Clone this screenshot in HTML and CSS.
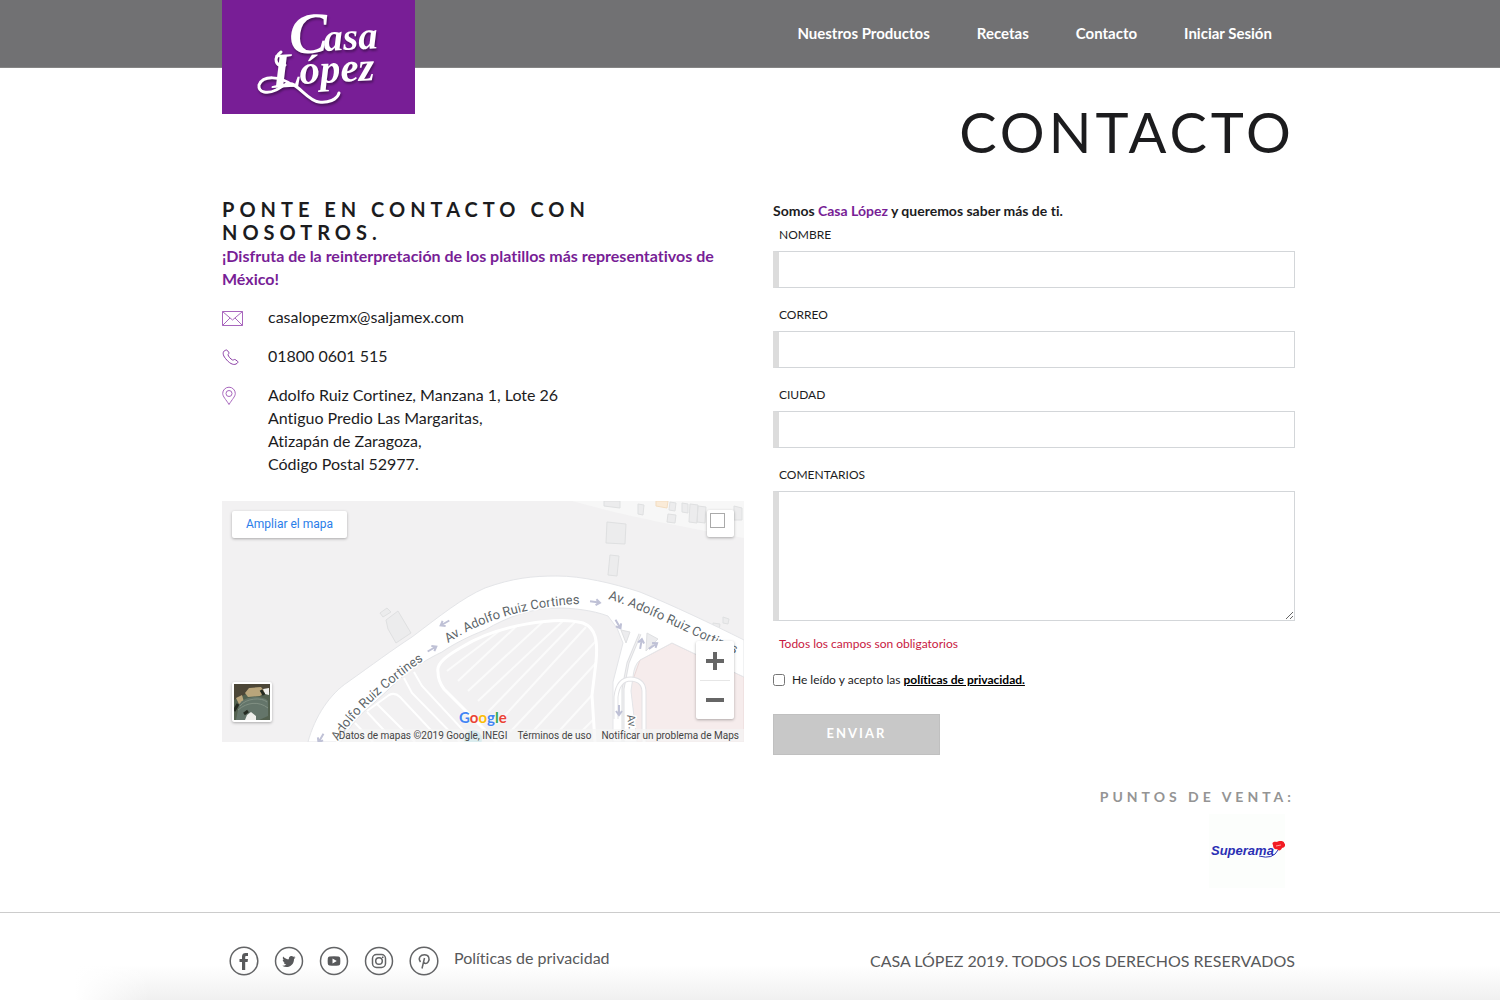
FILE: index.html
```html
<!DOCTYPE html>
<html lang="es">

<head>
    <meta charset="UTF-8">
    <meta name="viewport" content="width=device-width, initial-scale=1.0">
    <title>Contacto | Casa López</title>
    <link rel="stylesheet" href="styles.css">
</head>

<body>
    <header class="header">
        <a class="logo" href="#" aria-label="Casa López">
            <svg class="logo-img" viewBox="0 0 193 114">
                <g class="logo-text">
                    <text x="68" y="54" font-size="58" transform="rotate(-3 68 54)">C</text>
                    <text x="102" y="51" font-size="39" transform="rotate(-3 102 51)">asa</text>
                    <text x="50" y="88" font-size="50" transform="rotate(-3 50 88)">L</text>
                    <text x="78" y="84" font-size="41" transform="rotate(-3 78 84)">ópez</text>
                </g>
                <path class="swash" d="M59 52c-8 6-6 15 4 13M70 85c-12-9-29-10-33 0 -1 8 9 9 17 5 7-4 11-8 16-6 8 3 17 17 27 18 9 1 18-2 20-9" />
            </svg>
        </a>
        <nav class="nav">
            <a href="#">Nuestros Productos</a>
            <a href="#">Recetas</a>
            <a href="#">Contacto</a>
            <a href="#">Iniciar Sesión</a>
        </nav>
    </header>

    <main class="main">
        <h1 class="title">CONTACTO</h1>
        <div class="columns">
            <section class="info">
                <h2>PONTE EN CONTACTO CON NOSOTROS.</h2>
                <p class="slogan">¡Disfruta de la reinterpretación de los platillos más representativos de México!</p>
                <ul class="datos">
                    <li>
                        <svg width="22" height="23" viewBox="0 0 22 23">
                            <path d="M.5 6.500h20v14H.5zM.5 6.500l10 8.500 10-8.500M.5 20.500l7.500-7.500M20.500 20.500l-7.500-7.500" />
                        </svg>
                        <span>casalopezmx@saljamex.com</span>
                    </li>
                    <li>
                        <svg class="fuerte" width="22" height="23" viewBox="0 0 22 23">
                            <path d="M3 6.500C.5 7.500.5 11 3.500 14.500 7 19 11 21.500 14 20c2-1 2.300-2 1.500-2.800l-2.300-1.600c-1-.6-1.700.8-2.700.4C8.500 15 6.500 12.500 6 10.800c-.2-1 1.300-1 1-2L5.500 6.600C5 5.600 4 6 3 6.500z" />
                        </svg>
                        <span>01800 0601 515</span>
                    </li>
                    <li>
                        <svg width="22" height="23" viewBox="0 0 22 23">
                            <path d="M7 21.500C4 16.500.7 13.500.7 10.500a6.300 6.300 0 0 1 12.600 0c0 3-3.300 6-6.300 11z" />
                            <circle cx="7" cy="10.500" r="3" />
                        </svg>
                        <address>Adolfo Ruiz Cortinez, Manzana 1, Lote 26<br>Antiguo Predio Las Margaritas,<br>Atizapán de Zaragoza,<br>Código Postal 52977.</address>
                    </li>
                </ul>

                <div class="mapa">
                    <svg class="mapa-img" viewBox="0 0 522 241" preserveAspectRatio="xMidYMid slice">
                        <defs>
                            <path id="calle1" d="M116 240C129 218 163 184 211 153" />
                            <path id="calle2" d="M226 142C262 118 310 105 358 103" />
                            <path id="calle3" d="M386 98C420 108 460 130 530 160" />
                            <path id="calle4" d="M405 214L409 245" />
                            <clipPath id="lote"><path d="M216 171C214 162 226 154 240 146C275 124 335 115 361 122C374 127 376 140 374 161L370 194L373 241H275L222 188Q216 180 216 171z" /></clipPath>
                        </defs>
                        <rect width="522" height="241" fill="#f2f1f2" />

                        <!-- manzana superior -->
                        <path d="M350 0C400 14 450 24 522 37V0z" fill="#f7f7f7" />
                        <g fill="#ececed" stroke="#dfe0e1">
                            <path d="M385 21l19 2-1 20-19-1zM388 54l9 1-2 20-9-1zM382 0h16v7l-16-2zM416 3l6 1-1 10-5-1zM446 13l8 1-1 8-8-1zM448 1l6 1-1 8-6-1zM460 2l6 1v9l-6-1zM468 3l8 1-1 18-8-1zM476 5l8 1-1 16-8-1zM512 5l8 2v12h-8z" />
                            <path d="M158 112l7-5 4 4-8 5zM164 119l12-9 13 22-15 10-8-14zM491 122l7 1-1 7-6-1zM501 116l6 2-1 5-5-1z" />
                        </g>
                        <path d="M434 0h12l-1 7-11-2z" fill="#faebd8" stroke="#f3ddc0" />

                        <!-- estacionamientos -->
                        <g clip-path="url(#lote)" stroke="#fbfbfb" stroke-width="2">
                            <path d="M236 180l64-60M246 190l78-72M256 200l85-80M266 211l87-90M276 222l88-96M288 231l87-92M302 240l72-78M328 240l44-48M350 240l22-22M225 170l55-42" />
                        </g>
                        <g fill="none" stroke="#fff" stroke-width="3">
                            <path d="M275 241L222 188Q216 180 216 171C214 162 226 154 240 146C275 124 335 115 361 122C374 127 376 140 374 161L370 194L373 241" />
                            <path d="M145 210l22-16q6-3 11 2l42 45M182 177l8 15 48 49M192 171l8 14 52 56M155 203l38 38M145 211l28 30M133 222l18 19" stroke-width="2" />
                        </g>

                        <!-- avenidas -->
                        <path d="M418 159L450 142L471 152L522 176V241H415L408 187z" fill="#f6ecec" stroke="#ead9d9" />
                        <path d="M86 241C93 215 108 193 126 181C150 164 170 149 190 136C218 115 240 97 263 87C291 77 310 75 335 75C360 75 390 82 418 91C450 104 490 123 522 139V176L471 152L450 142L418 159Q412 164 411 176L409 190L415 241H391V181L401 142L395 127L386 115C370 109 350 107 335 107C310 107 285 116 263 129C245 136 230 144 220 151C205 158 190 168 180 176L153 201Q130 219 119 241z" fill="#fff" stroke="#e4e5e8" />
                        <path d="M418 133l-12 29-5 26v53" fill="none" stroke="#dfe0e3" stroke-width="3" />
                        <path d="M418 133l-12 29-5 26v53" fill="none" stroke="#f2f1f2" />
                        <path d="M394 218v-22q2-18 15-18 14 1 13 15v48" fill="none" stroke="#e2e2e5" stroke-width="5" />
                        <path d="M394 218v-22q2-18 15-18 14 1 13 15v48" fill="none" stroke="#fff" stroke-width="3" />
                        <path d="M399 129l9 2-4 11zM425 132l11 6-12 12z" fill="#ececee" stroke="#dfe0e2" />

                        <!-- sentido de la calle -->
                        <g class="flechas">
                            <path d="M-5 0H4M1-3L5 0 1 3" transform="translate(373 101) rotate(8)" />
                            <path d="M-5 0H4M1-3L5 0 1 3" transform="translate(210 148) rotate(-30)" />
                            <path d="M-5 0H4M1-3L5 0 1 3" transform="translate(223 122) rotate(150)" />
                            <path d="M-5 0H4M1-3L5 0 1 3" transform="translate(396 123) rotate(60)" />
                            <path d="M-5 0H4M1-3L5 0 1 3" transform="translate(419 143) rotate(-80)" />
                            <path d="M-5 0H4M1-3L5 0 1 3" transform="translate(431 145) rotate(-35)" />
                            <path d="M-5 0H4M1-3L5 0 1 3" transform="translate(397 209) rotate(90)" />
                            <path d="M-5 0H4M1-3L5 0 1 3" transform="translate(99 237) rotate(120)" />
                        </g>
                        <circle cx="251" cy="238" r="9" fill="#9bd8dc" />
                        <g class="calles">
                            <text><textPath href="#calle1">Adolfo Ruiz Cortines</textPath></text>
                            <text><textPath href="#calle2">Av. Adolfo Ruiz Cortines</textPath></text>
                            <text><textPath href="#calle3">Av. Adolfo Ruiz Cortines</textPath></text>
                            <text class="chica"><textPath href="#calle4">Av.</textPath></text>
                        </g>
                    </svg>
                    <a class="ampliar" href="#">Ampliar el mapa</a>
                    <button class="pantalla" type="button" aria-label="Pantalla completa"><i></i></button>
                    <button class="satelite" type="button" aria-label="Satélite">
                        <svg width="36" height="36" viewBox="0 0 36 36">
                            <rect width="36" height="36" fill="#53614f" />
                            <path d="M0 0h36v8L24 12 12 10 0 16z" fill="#4c4637" />
                            <path d="M11 9l4-5 12-1 4 5-5 4-12 1zM2 14l6-3 2 7-5 2z" fill="#b9a57b" />
                            <path d="M5 21C10 10 32 12 34 17v15L25 36H2z" fill="#64756a" />
                            <path d="M6 22C12 14 28 13 33 18M4 26C13 18 25 17 34 24" fill="none" stroke="#819083" />
                            <path d="M29 5l6-1v7l-4-1zM13 31l4-3 5 4v4H11z" fill="#f0f0ec" />
                            <path d="M0 27l4-7M27 6l3 5M10 30l4-3" stroke="#252b21" stroke-width="3" />
                        </svg>
                    </button>
                    <div class="zoom">
                        <button type="button" aria-label="Acercar"><svg width="18" height="18"><path d="M0 9h18M9 0v18" /></svg></button>
                        <button type="button" aria-label="Alejar"><svg width="18" height="18"><path d="M0 9h18" /></svg></button>
                    </div>
                    <div class="google"><b>G</b><b>o</b><b>o</b><b>g</b><b>l</b><b>e</b></div>
                    <div class="creditos">
                        <span>Datos de mapas ©2019 Google, INEGI</span>
                        <a href="#">Términos de uso</a>
                        <a href="#">Notificar un problema de Maps</a>
                    </div>
                </div>
            </section>

            <section class="contacto">
                <form class="formulario">
                    <p class="intro">Somos <span>Casa López</span> y queremos saber más de ti.</p>
                    <label for="nombre">NOMBRE</label>
                    <input type="text" id="nombre" name="nombre">
                    <label for="correo">CORREO</label>
                    <input type="email" id="correo" name="correo">
                    <label for="ciudad">CIUDAD</label>
                    <input type="text" id="ciudad" name="ciudad">
                    <label for="comentarios">COMENTARIOS</label>
                    <textarea id="comentarios" name="comentarios"></textarea>
                    <p class="aviso">Todos los campos son obligatorios</p>
                    <div class="acepto">
                        <input type="checkbox" id="acepto" name="acepto">
                        <label for="acepto">He leído y acepto las <a href="#">políticas de privacidad.</a></label>
                    </div>
                    <button class="enviar" type="submit">ENVIAR</button>
                </form>
                <div class="venta">
                    <h3>PUNTOS DE VENTA:</h3>
                    <a href="#" aria-label="Superama">
                        <svg width="76" height="74" viewBox="0 0 76 74">
                            <text x="2" y="41">Superama</text>
                            <path d="M50 42q14 4 19-6" fill="none" stroke="#2a2fb4" />
                            <path d="M64 31c-2-3 2-4 4-3 2-2 8-1 7 1 3 2 0 5-2 5-1 3-4 3-5 1-3 1-4-2-4-4z" fill="#f21c24" />
                            <path d="M67 32l5-1" stroke="#ff9c9c" />
                        </svg>
                    </a>
                </div>
            </section>
        </div>
    </main>

    <footer class="footer">
        <div class="redes">
            <a href="#" aria-label="Facebook"><svg viewBox="0 0 30 30"><circle cx="15" cy="15" r="13.800" /><path d="M13 24v-8h-2.500v-3H13v-2.500C13 8 14.500 7 16.500 7H19v3h-1.500c-1 0-1.300.4-1.300 1.200V13H19l-.4 3h-2.400v8z" /></svg></a>
            <a href="#" aria-label="Twitter"><svg viewBox="0 0 30 30"><circle cx="15" cy="15" r="13.500" /><path d="M21.500 11.200c-.5.300-1 .4-1.500.5.600-.4 1-.9 1.200-1.500-.6.300-1.200.5-1.800.6-2-2-5.200-.3-4.500 2.500-2.300-.1-4.200-1.100-5.700-2.900-.8 1.300-.4 2.800.8 3.700-.5 0-.9-.1-1.300-.3 0 1.400 1 2.500 2.300 2.800-.4.100-.8.100-1.300 0 .4 1.200 1.400 1.900 2.700 2-1.200.9-2.700 1.300-4.200 1.200 5.500 3.400 12-.4 11.800-6.800.6-.5 1.100-1 1.500-1.800z" /></svg></a>
            <a href="#" aria-label="YouTube"><svg viewBox="0 0 30 30"><circle cx="15" cy="15" r="13.500" /><path fill-rule="evenodd" d="M10.500 10.500q4.500-.5 9 0 1.500.2 1.700 1.700.3 2.800 0 5.600-.2 1.500-1.700 1.700-4.500.5-9 0-1.500-.2-1.700-1.700-.3-2.800 0-5.600.2-1.500 1.700-1.700zM13.500 12.500v5l4.300-2.500z" /></svg></a>
            <a href="#" aria-label="Instagram"><svg viewBox="0 0 30 30"><circle cx="15" cy="15" r="13.500" /><rect class="linea" x="8.500" y="8.500" width="13" height="13" rx="4" /><circle cx="15" cy="15" r="3.300" /><path d="M18 10.500h1.500V12H18z" /></svg></a>
            <a href="#" aria-label="Pinterest"><svg viewBox="0 0 30 30"><circle cx="15" cy="15" r="13.800" /><path class="linea" d="M11.500 16C8.500 12 11.500 8.800 15.500 8.800c4.500 0 5.500 4 3.700 7-1.500 2.400-4 2-4.500.4M15.500 12L13 22.500" /></svg></a>
            <a class="politicas" href="#">Políticas de privacidad</a>
        </div>
        <p>CASA LÓPEZ 2019. TODOS LOS DERECHOS RESERVADOS</p>
    </footer>
</body>

</html>
```
FILE: styles.css
```css
* {
    box-sizing: border-box;
}

body {
    margin: 0;
    min-height: 100vh;
    display: flex;
    flex-direction: column;
    font-family: Lato, "Liberation Sans", sans-serif;
    font-size: 16px;
    font-variant-ligatures: none;
    line-height: 23px;
    color: #1c1c1e;
    background: #fff;
}

h1, h2, h3, p, ul {
    margin: 0;
    padding: 0;
    list-style: none;
}

.header, .main, .footer {
    padding-left: 14.8%;
    padding-right: 13.67%;
}

/* cabecera */
.header {
    height: 68px;
    display: flex;
    justify-content: space-between;
    align-items: flex-start;
    background: #717173;
    border-bottom: 1px solid #858585;
}

.logo {
    background: #781e96;
    width: 193px;
    height: 114px;
    z-index: 1;
}

.logo-img {
    display: block;
    width: 100%;
    filter: drop-shadow(1px 2px 1px rgba(0, 0, 0, .4));
}

.logo-text {
    font-family: "Liberation Serif", serif;
    font-style: italic;
    font-weight: bold;
    fill: #fff;
}

.swash {
    fill: none;
    stroke: #fff;
    stroke-width: 3;
    stroke-linecap: round;
}

.nav {
    display: flex;
    gap: 47px;
    padding: 22px 23px 0 0;
}

.nav a {
    color: #fff;
    font-size: 15px;
    font-weight: bold;
    text-decoration: none;
}

.title {
    margin-top: 30px;
    font-size: 56px;
    font-weight: 400;
    line-height: 68px;
    letter-spacing: 4px;
    text-align: right;
}

.columns {
    display: grid;
    grid-template-columns: 1fr 1fr;
    gap: 29px;
    margin-top: 32px;
}

/* columna izquierda */
.info h2 {
    font-size: 20px;
    line-height: 23px;
    letter-spacing: 5px;
}

.slogan {
    color: #781e96;
    font-weight: bold;
}

.datos {
    display: grid;
    gap: 16px;
    margin-top: 15px;
}

.datos li {
    display: flex;
    gap: 24px;
}

.datos svg {
    flex: none;
    fill: none;
    stroke: #a866bd;
}

.datos .fuerte {
    stroke: #8a3ca5;
}

address {
    font-style: normal;
}

.mapa {
    position: relative;
    height: 241px;
    margin-top: 26px;
    overflow: hidden;
    font-family: Roboto, sans-serif;
}

.mapa-img {
    display: block;
    width: 100%;
    height: 100%;
}

.calles {
    font-size: 13px;
    fill: #5d6569;
    stroke: #fff;
    stroke-width: 3;
    paint-order: stroke;
}

.chica {
    font-size: 11px;
}

.flechas {
    fill: none;
    stroke: #bfc1d6;
    stroke-width: 2;
}

.ampliar, .pantalla, .satelite, .zoom {
    position: absolute;
    background: #fff;
    border: 0;
    border-radius: 2px;
    box-shadow: 0 1px 3px rgba(0, 0, 0, .3);
}

.ampliar {
    top: 10px;
    left: 10px;
    padding: 2px 14px;
    color: #2a7de9;
    font-size: 12px;
    text-decoration: none;
}

.pantalla {
    top: 9px;
    right: 10px;
    width: 27px;
    height: 27px;
    padding: 3px;
}

.pantalla i {
    display: block;
    width: 15px;
    height: 15px;
    margin-top: -6px;
    border: 1px solid #aaa;
}

.satelite {
    left: 10px;
    bottom: 20px;
    padding: 2px;
}

.satelite svg {
    display: block;
}

.zoom {
    right: 10px;
    bottom: 23px;
    width: 38px;
    padding: 0 4px;
}

.zoom button {
    display: block;
    width: 100%;
    height: 39px;
    padding: 0;
    border: 0;
    background: none;
}

.zoom button + button {
    border-top: 1px solid #e6e6e6;
}

.zoom svg {
    display: block;
    margin: auto;
    stroke: #666;
    stroke-width: 4;
}

.google {
    position: absolute;
    left: 237px;
    bottom: 13px;
    font-family: Lato, sans-serif;
    font-size: 15px;
    text-shadow: 0 0 2px #fff;
}

.google b {
    color: #4285f4;
}

.google b:nth-child(2), .google b:nth-child(6) {
    color: #ea4335;
}

.google b:nth-child(3) {
    color: #fbbc05;
}

.google b:nth-child(5) {
    color: #34a853;
}

.creditos {
    position: absolute;
    right: 0;
    bottom: 0;
    display: flex;
    gap: 10px;
    padding: 0 5px 0 0;
    font-size: 10px;
    line-height: 13px;
    white-space: nowrap;
    background: rgba(245, 245, 245, .7);
}

.creditos, .creditos a {
    color: #444;
    text-decoration: none;
}

/* formulario */
.formulario {
    display: flex;
    flex-direction: column;
    align-items: flex-start;
    font-size: 12px;
    line-height: 16px;
}

.intro {
    margin: 5px 0 8px;
    font-size: 14px;
    font-weight: bold;
}

.intro span {
    color: #781e96;
}

.formulario > label {
    margin: 0 6px 8px;
}

.formulario > input, textarea {
    width: 100%;
    height: 37px;
    margin-bottom: 19px;
    border: 1px solid #d3d6d9;
    border-left: 6px solid #dcdcdc;
    background: #fff;
    font: inherit;
}

.formulario > textarea {
    height: 130px;
    margin-bottom: 15px;
}

.aviso {
    margin: 0 6px;
    color: #c8193f;
}

.acepto {
    display: flex;
    align-items: center;
    gap: 7px;
    margin-top: 20px;
}

.acepto input {
    width: 12px;
    height: 12px;
    margin: 0;
}

.acepto a {
    color: #000;
    font-weight: bold;
}

.enviar {
    width: 167px;
    height: 41px;
    margin-top: 26px;
    padding-bottom: 4px;
    border: 1px solid #c0c0c0;
    background: #c8c8c8;
    color: #fff;
    font: bold 13px Lato, sans-serif;
    letter-spacing: 2px;
}

.venta {
    display: flex;
    flex-direction: column;
    align-items: flex-end;
    margin-top: 33px;
}

.venta h3 {
    color: #949494;
    font-size: 14px;
    line-height: 18px;
    letter-spacing: 4px;
}

.venta a {
    margin: 8px 10px 0 0;
    background: #fcfefc;
}

.venta svg {
    display: block;
}

.venta text {
    font: italic bold 13px "Liberation Sans", sans-serif;
    fill: #2a2fb4;
}

/* pie */
.footer {
    flex: 1;
    display: flex;
    justify-content: space-between;
    align-items: flex-start;
    margin-top: 24px;
    padding-top: 33px;
    padding-bottom: 24px;
    border-top: 1px solid #ccc;
    background: linear-gradient(90deg, #fff 5%, transparent 10%), linear-gradient(#fff 60%, #f0f0f0);
    color: #58595b;
}

.redes {
    display: flex;
    gap: 15px;
    padding-left: 7px;
}

.redes svg {
    display: block;
    width: 30px;
    height: 30px;
    fill: #58595b;
}

.redes circle, .redes .linea {
    fill: none;
    stroke: #636466;
    stroke-width: 1.500;
}

.redes .politicas {
    color: #58595b;
    text-decoration: none;
}

.footer p {
    margin-top: 3px;
}
```
